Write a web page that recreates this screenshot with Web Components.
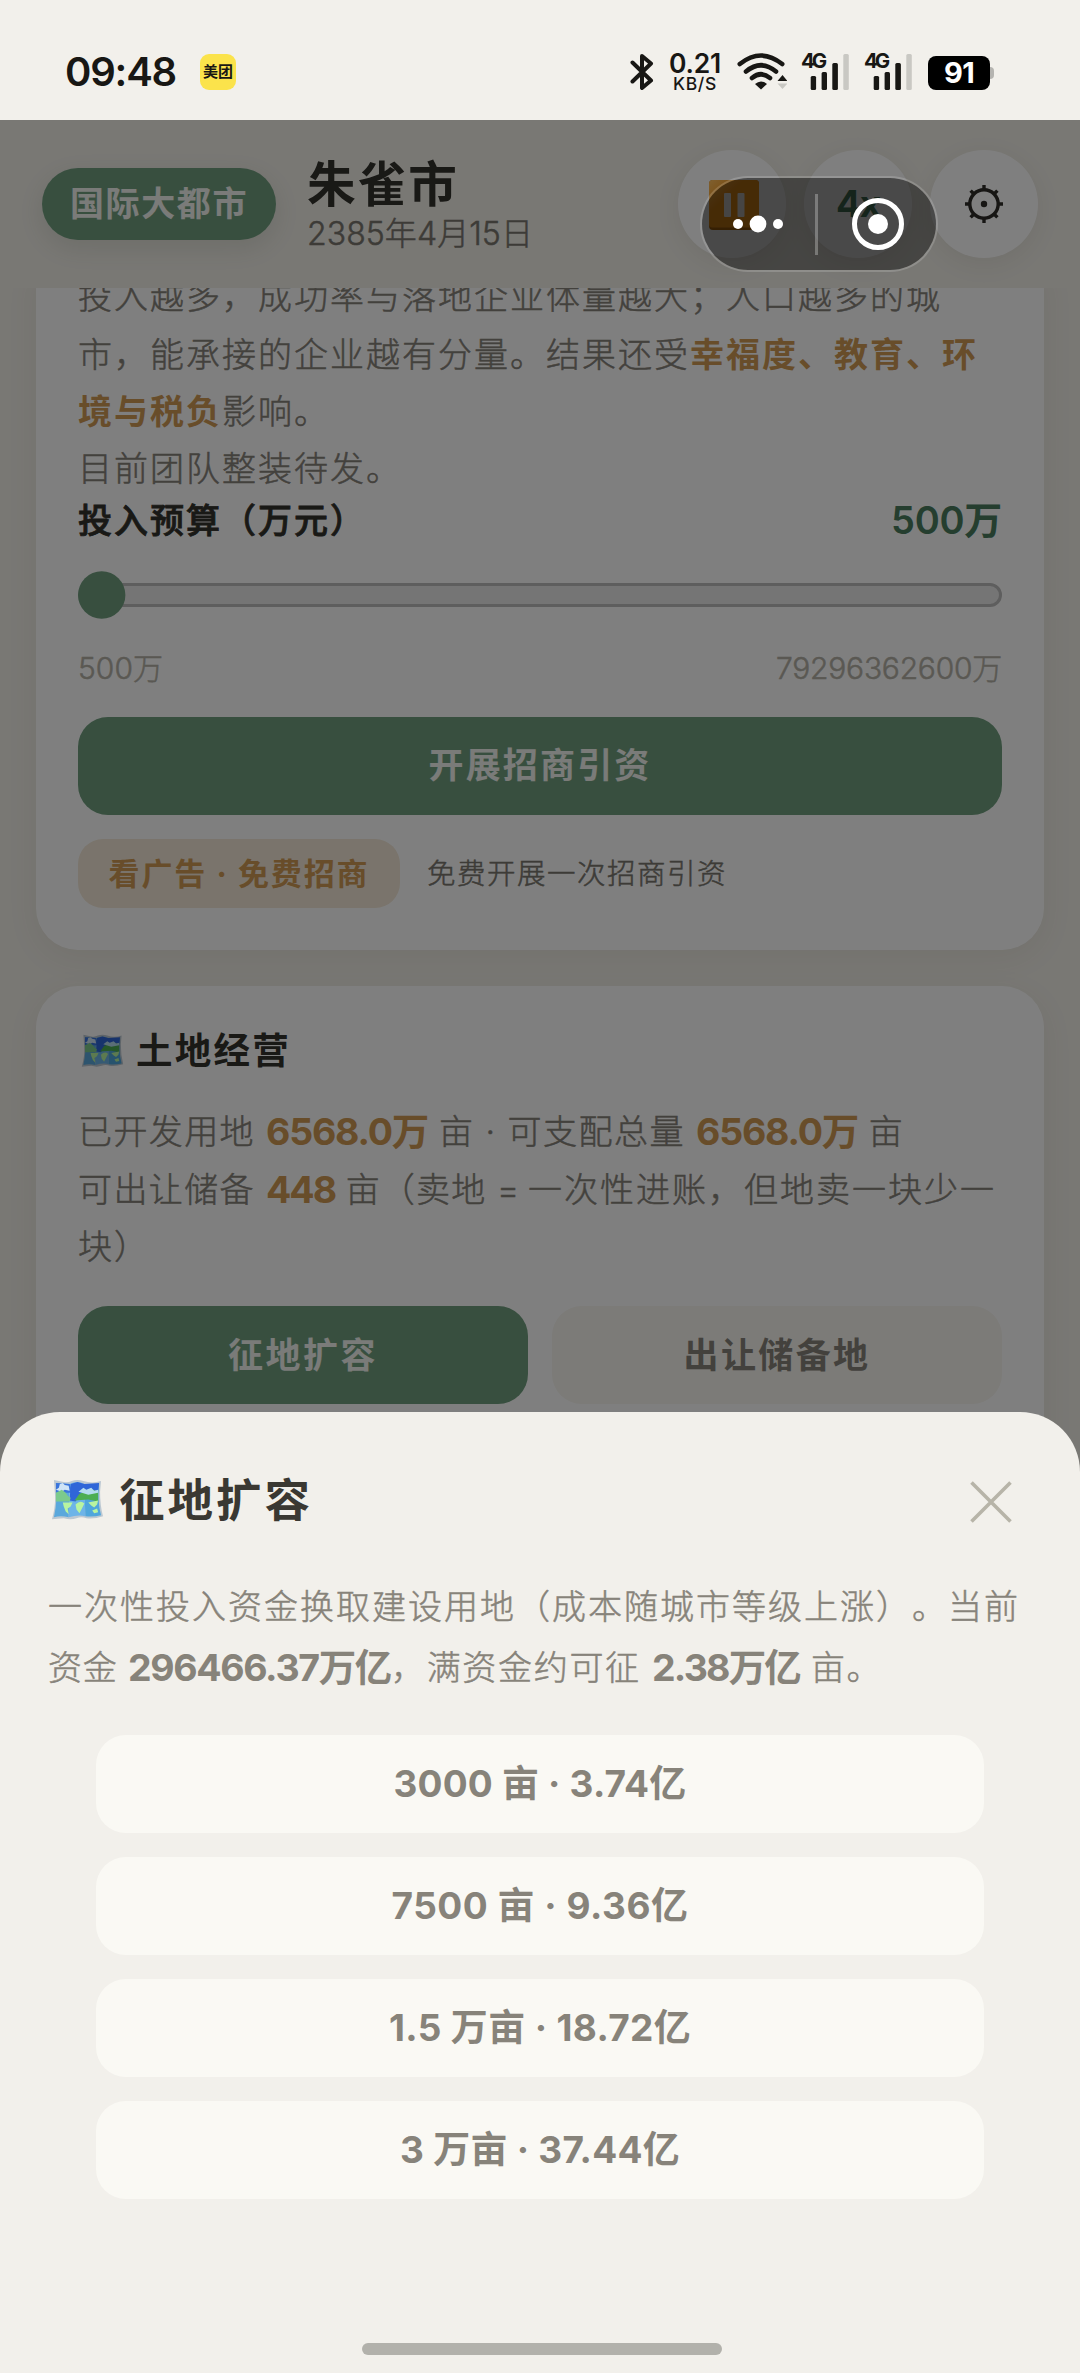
<!DOCTYPE html>
<html lang="zh-CN">
<head>
<meta charset="utf-8">
<title>朱雀市</title>
<style>
html,body{margin:0;padding:0}
body{width:1080px;height:2373px;overflow:hidden;background:#f2f0eb;font-family:Inter,"Noto Sans CJK SC",sans-serif}
</style>
</head>
<body>
<city-app></city-app>
<script>
const define = (name, html, setup) => {
  const tpl = document.createElement('template');
  tpl.innerHTML = html;
  customElements.define(name, class extends HTMLElement {
    connectedCallback() {
      if (this.shadowRoot) return;
      this.attachShadow({ mode: 'open' }).appendChild(tpl.content.cloneNode(true));
      if (setup) setup(this);
    }
  });
};

/* ---------- icons ---------- */
define('icon-map', `
<style>:host{display:block;width:var(--w,53px);flex:none}svg{display:block;width:100%;height:auto}</style>
<svg viewBox="0 0 54 42">
  <path d="M3 1 L13 3 Q17 4 21 2 Q27 0 33 2 Q42 5 51 2 L50 13 Q50 27 53 38 Q44 41 36 40 Q31 38 26 40 Q20 42 13 40 L1 41 Q5 27 4 15Z" fill="#bcc8d2"/>
  <path d="M5 4 L19 5 L18 39 Q10 37 3 39 Q7 20 5 4Z" fill="#5aa8dc"/>
  <path d="M19 5 Q27 1 34 5 L35 38 Q28 36 18 39Z" fill="#6db4e8"/>
  <path d="M34 5 Q42 7 49 5 Q47 22 51 37 Q43 39 35 38Z" fill="#4fa6dc"/>
  <path d="M5 4 L19 5 L22 14 L5 14Z" fill="#3a74dc"/><path d="M20 5 L27 3 L34 5 L49 4 L48 13 L30 16 L25 23 L19 22Z" fill="#2f66d8"/>
  <path d="M9 5 L12 4 L14 6 L18 7 L19 12 L14 11 L11 13 L5 11 L8 9Z" fill="#cfe4f6"/>
  <path d="M5 14 L11 11 L15 14 L17 17 L20 19 L19 23 L5 23Z" fill="#7cca8c"/>
  <path d="M24 22 L29 15 L34 13 L38 14 L43 11 L48 13 L48 23 L38 21Z" fill="#4cae52"/>
  <path d="M28 13 L33 9 L36 11 L41 9 L44 12 L48 11 V14 L38 16Z" fill="#b4dcee"/>
  <path d="M12 24 L22 24 L20 28 L17 30 L18 36 L15 33 L13 28Z M25 26 Q30 21 34 25 L32 29 L29 35 L26 31Z M38 24 L48 22 L47 26 L44 29 L41 27Z M42 32 L47 30 L48 34 L44 35Z" fill="#b8f4a0"/>
</svg>`);
define('icon-gear', `
<style>:host{display:block;width:40px;height:40px}</style>
<svg width="40" height="40" viewBox="-20 -20 40 40" fill="none" stroke="#2e2d28" stroke-width="3.4">
  <circle r="14.2"/><circle r="3.2" fill="#2e2d28" stroke="none"/>
  <path d="M0-19V-15M0 19V15M-19 0H-15M19 0H15M-13.4-13.4L-10.5-10.5M13.4 13.4L10.5 10.5M-13.4 13.4L-10.5 10.5M13.4-13.4L10.5-10.5"/>
</svg>`);
define('icon-pause', `
<style>:host{display:block;width:50px;height:50px}</style>
<svg width="50" height="50" viewBox="0 0 50 50">
  <defs><linearGradient id="g" x1="0" y1="0" x2=".35" y2=".35"><stop offset="0" stop-color="#ffc060"/><stop offset="1" stop-color="#f29419"/></linearGradient></defs>
  <rect width="50" height="50" rx="4" fill="#b96d0d"/><rect width="50" height="47.5" rx="3.5" fill="url(#g)"/>
  <rect x="15" y="13" width="7" height="24" rx="1" fill="#f2f0eb"/><rect x="28.5" y="13" width="7" height="24" rx="1" fill="#f2f0eb"/>
</svg>`);
define('icon-signal', `
<style>:host{display:grid;width:49px;height:38px}svg,t-run{grid-area:1/1}t-run{margin-top:-1px}</style>
<svg width="49" height="38" fill="#181714"><rect x="9.7" y="24" width="5.4" height="14" rx="1.5"/><rect x="20.6" y="20" width="5.4" height="18" rx="1.5"/><rect x="31.3" y="11" width="5.6" height="27" rx="1.5"/><rect x="42.3" y="2" width="5.5" height="36" rx="1.5" fill="#c9c8c3"/></svg>
<t-run w="23" size="20.5" weight="700" lh="20" color="#181714">4G</t-run>`);

/* ---------- status bar ---------- */
define('status-bar', `
<style>
:host{display:flex;align-items:flex-start;height:120px;box-sizing:border-box;background:#f2f0eb;padding:0 0 0 65px}
.time{margin-top:48px;width:135px}
.mt{margin-top:54px;width:36px;height:36px;border-radius:9px;background:#fbe34b;display:flex;justify-content:center;align-items:center;margin-right:394px}
.net{margin:48px 16px 0 15px;width:52px;display:flex;flex-direction:column;align-items:center}
.wifi{margin:53px 14px 0 0}
.bt{margin-top:53px}
icon-signal{margin:52px 14px 0 0}
.bat{margin:56px 0 0 1px;width:62px;height:34px;border-radius:8px;background:#000;display:flex;align-items:center;justify-content:center}
.nub{margin-top:67px;width:4px;height:12px;background:#b5b4b0;border-radius:0 4px 4px 0}
</style>
<t-run class="time" w="111" size="40" weight="600" lh="48" color="#181714">09:48</t-run>
<div class="mt"><t-run w="30" size="15" weight="700" lh="20" color="#181714">美团</t-run></div>
<svg class="bt" width="24" height="38" viewBox="0 0 24 38" fill="none" stroke="#181714" stroke-width="4" stroke-linejoin="round" stroke-linecap="round"><path d="M2.5 9.5 L21 27.5 L12 35 V3 L21 10.5 L2.5 28.5"/></svg>
<div class="net"><t-run w="52" size="26.5" weight="600" lh="31" color="#181714">0.21</t-run><t-run w="44" size="17.5" weight="500" lh="10" color="#181714">KB/S</t-run></div>
<svg class="wifi" width="50" height="38" viewBox="0 0 50 38"><g fill="none" stroke="#181714" stroke-width="4.6" stroke-linecap="round"><path d="M2.8 11 Q24 -6 45.2 11"/><path d="M9 18.5 Q24 6 39 18.5"/><path d="M15 25 Q24 17.5 33 25"/></g><path d="M18 31 Q24 26 30 31 L24 36.5Z" fill="#181714"/><path d="M40.5 28 L45.5 22 L50.5 28Z" fill="#181714"/><path d="M40.5 30.5 L45.5 36 L50.5 30.5Z" fill="#c9c8c3"/></svg>
<icon-signal></icon-signal><icon-signal></icon-signal>
<div class="bat"><t-run w="30" size="29" weight="700" lh="34" color="#fff">91</t-run></div><div class="nub"></div>`);

/* ---------- header ---------- */
define('round-button', `
<style>:host{display:flex;align-items:center;justify-content:center;width:108px;height:108px;border-radius:50%;background:#fff;box-shadow:0 6px 24px rgba(60,55,40,.08)}</style><slot></slot>`);
define('city-header', `
<style>
:host{display:flex;height:168px;box-sizing:border-box;padding-left:42px;background:#f2f0e9}
.level{margin-top:48px;width:234px;height:72px;border-radius:36px;background:#709f7f;display:flex;align-items:center;justify-content:center;box-shadow:0 8px 24px rgba(60,70,50,.12)}
.name{margin:35px 0 0 31px;width:371px}
.actions{display:flex;gap:18px;margin-top:30px}
.p{margin-left:4px;margin-top:1px}
</style>
<div class="level"><t-run w="178" size="34" weight="700" lh="72" color="#f4f6f2">国际大都市</t-run></div>
<div class="name"><t-run w="152" size="48.5" weight="700" lh="59" color="#33322c">朱雀市</t-run><t-run w="226" size="32" weight="300" lh="40" color="#7a776f">2385年4月15日</t-run></div>
<div class="actions"><round-button><icon-pause class="p"></icon-pause></round-button><round-button><t-run w="44" size="37" weight="700" lh="108" color="#4a7c5f">4x</t-run></round-button><round-button><icon-gear></icon-gear></round-button></div>`);

/* ---------- building blocks ---------- */
define('text-line', `<style>:host{display:flex;height:57.4px;align-items:center}</style><slot></slot>`);
define('panel-card', `
<style>:host{display:block;margin:0 36px 36px;padding:0 42px;border-radius:42px;background:#fff;box-shadow:0 8px 32px rgba(80,70,40,.07)}</style><slot></slot>`);
define('big-button', `
<style>:host{display:flex;align-items:center;justify-content:center;height:98px;border-radius:30px;background:#709f7f;flex:1}
:host([kind=plain]){background:#f8f6f0}:host([kind=option]){background:#faf9f4;flex:none}</style><slot></slot>`);
define('budget-slider', `
<style>:host{display:block;height:48px}svg{display:block;width:100%;height:48px}</style>
<svg viewBox="0 0 924 48"><rect x="1.5" y="13.5" width="921" height="21" rx="10.5" fill="#ebebeb" stroke="#bcbcbc" stroke-width="3"/><circle cx="23.7" cy="24" r="23.7" fill="#709f7f"/></svg>`);

define('invest-card', `
<style>
:host{display:block;margin-top:-20px}
.row{display:flex;justify-content:space-between}
panel-card{border-radius:0 0 42px 42px;height:682px}
.budget{height:57px;margin-top:-6px;align-items:center}
budget-slider{margin-top:22px}
.range{margin-top:27px;height:44px}
big-button{margin-top:27px}
.ad{display:flex;align-items:center;margin-top:24px}
.pill{width:322px;height:69px;border-radius:25px;background:#f4e9d8;display:flex;align-items:center;justify-content:center;margin-right:27px}
</style>
<panel-card>
<text-line><t-run w="864">投入越多，成功率与落地企业体量越大；人口越多的城</t-run></text-line>
<text-line><t-run w="612">市，能承接的企业越有分量。结果还受</t-run><t-run w="288" weight="700" color="#d09a55">幸福度、教育、环</t-run></text-line>
<text-line><t-run w="144" weight="700" color="#d09a55">境与税负</t-run><t-run w="108">影响。</t-run></text-line>
<text-line><t-run w="324">目前团队整装待发。</t-run></text-line>
<div class="row budget"><t-run w="288" weight="500" stroke="0.8" color="#33322c" size="34">投入预算（万元）</t-run><t-run w="111" size="38" weight="600" color="#4a7c5f">500万</t-run></div>
<budget-slider></budget-slider>
<div class="row range"><t-run w="85" size="30" weight="300" color="#b4b1a6" lh="44">500万</t-run><t-run w="226" size="30" weight="300" color="#b4b1a6" lh="44">79296362600万</t-run></div>
<big-button><t-run w="223" size="35" weight="700" color="#f4f6f2">开展招商引资</t-run></big-button>
<div class="ad"><div class="pill"><t-run w="261" size="31" weight="700" color="#d09a55">看广告 · 免费招商</t-run></div><t-run w="300" size="28.5" weight="300" color="#7a776f">免费开展一次招商引资</t-run></div>
</panel-card>`);

define('land-card', `
<style>
:host{display:block}
.title{display:flex;align-items:center;height:58px;padding-top:35px;margin-bottom:23px}
icon-map{--w:43px;margin:0 12px 0 3px}
panel-card{padding-top:1px;height:600px}
.row{display:flex;gap:24px;margin-top:31px}
</style>
<panel-card>
<div class="title"><icon-map></icon-map><t-run w="155" size="36.5" weight="700" color="#33322c">土地经营</t-run></div>
<text-line><t-run w="188">已开发用地 </t-run><t-run w="162" size="37.5" weight="700" color="#d09a55">6568.0万</t-run><t-run w="268"> 亩 · 可支配总量 </t-run><t-run w="162" size="37.5" weight="700" color="#d09a55">6568.0万</t-run><t-run w="46"> 亩</t-run></text-line>
<text-line><t-run w="188">可出让储备 </t-run><t-run w="69" size="37.5" weight="700" color="#d09a55">448</t-run><t-run w="162"> 亩（卖地 </t-run><t-run w="31">= </t-run><t-run w="468">一次性进账，但地卖一块少一</t-run></text-line>
<text-line><t-run w="72">块）</t-run></text-line>
<div class="row"><big-button><t-run w="150" size="35" weight="700" color="#f4f6f2">征地扩容</t-run></big-button><big-button kind="plain"><t-run w="187" size="35" weight="700">出让储备地</t-run></big-button></div>
</panel-card>`);

/* ---------- overlays ---------- */
define('mini-capsule', `
<style>:host{display:block;box-sizing:border-box;width:238px;height:96px;border-radius:48px;border:2px solid rgba(255,255,255,.17);background:rgba(0,0,0,.42);background-clip:padding-box}svg{display:block}</style>
<svg width="234" height="92" viewBox="702 178 234 92"><g fill="#fff"><circle cx="738" cy="224" r="5"/><circle cx="758" cy="224" r="8.4"/><circle cx="778" cy="224" r="5"/><circle cx="878" cy="224" r="10"/></g><rect x="815" y="194" width="3" height="61" fill="#fff" opacity=".28"/><circle cx="878" cy="224" r="23.5" fill="none" stroke="#fff" stroke-width="5"/></svg>`);
define('land-sheet', `
<style>
:host{display:flex;flex-direction:column;box-sizing:border-box;height:961px;padding:53px 48px 0;background:#f2f0eb;border-radius:60px 60px 0 0}
.head{display:flex;align-items:center;height:70px;margin-bottom:41px}
icon-map{margin:-1px 15px 0 3px}
.x{margin:4px 20px 0 auto}
text-line{height:61px}
.list{display:flex;flex-direction:column;gap:24px;margin:37px 48px 0}
.home{width:360px;height:12px;border-radius:6px;background:#b2b1ab;margin:144px auto 0;transform:translateX(2px)}
.list t-run{margin-top:-2px}
</style>
<div class="head"><icon-map></icon-map><t-run w="194" size="45.5" weight="700" color="#3a3832">征地扩容</t-run>
<svg class="x" width="42" height="42" viewBox="0 0 42 42" stroke="#b7b4a8" stroke-width="3.6"><path d="M1.5 1.5L40.5 40.5M40.5 1.5L1.5 40.5"/></svg></div>
<text-line><t-run w="972">一次性投入资金换取建设用地（成本随城市等级上涨）。当前</t-run></text-line>
<text-line><t-run w="80">资金 </t-run><t-run w="263" size="37.5" weight="700">296466.37万亿</t-run><t-run w="261">，满资金约可征 </t-run><t-run w="148" size="37.5" weight="700">2.38万亿</t-run><t-run w="82"> 亩。</t-run></text-line>
<div class="list">
<big-button kind="option"><t-run w="293" size="37" weight="700">3000 亩 · 3.74亿</t-run></big-button>
<big-button kind="option"><t-run w="297" size="37" weight="700">7500 亩 · 9.36亿</t-run></big-button>
<big-button kind="option"><t-run w="302" size="37" weight="700">1.5 万亩 · 18.72亿</t-run></big-button>
<big-button kind="option"><t-run w="280" size="37" weight="700">3 万亩 · 37.44亿</t-run></big-button>
</div>
<div class="home"></div>`);

define('city-app', `
<style>
:host{display:flex;flex-direction:column;position:relative;width:1080px;height:2373px;overflow:hidden;background:#f2f0e9}
main{flex:1;min-height:0;overflow:hidden}
.mask{position:absolute;inset:120px 0 0;background:rgba(0,0,0,.5)}
mini-capsule{position:absolute;left:700px;top:176px}
land-sheet{position:absolute;left:0;right:0;bottom:0}
</style>
<status-bar></status-bar>
<city-header></city-header>
<main><invest-card></invest-card><land-card></land-card></main>
<div class="mask"></div>
<land-sheet></land-sheet>
<mini-capsule></mini-capsule>`);

/* A run of text whose tracking is adjusted so that it fills the width "w". */
define('t-run', `<style>:host{display:block;flex:none;white-space:pre;font-feature-settings:"calt" 0;text-spacing-trim:space-all}span{display:inline-block}</style><span><slot></slot></span>`, el => {
  const a = (n, d) => el.getAttribute(n) || d, s = el.style, span = el.shadowRoot.querySelector('span');
  const weight = a('weight', '300');
  s.fontSize = a('size', '34') + 'px';
  s.fontWeight = weight;
  s.lineHeight = a('lh', '57') + 'px';
  s.height = a('lh', '57') + 'px';
  s.color = a('color', '#87837a');
  s.webkitTextStrokeWidth = a('stroke', weight === '300' ? '0.5' : '0') + 'px';
  const w = +a('w');
  span.style.letterSpacing = (w - span.getBoundingClientRect().width) / [...el.textContent].length + 'px';
  if (!el.classList.contains('time')) s.width = w + 'px';
});
</script>
</body>
</html>
